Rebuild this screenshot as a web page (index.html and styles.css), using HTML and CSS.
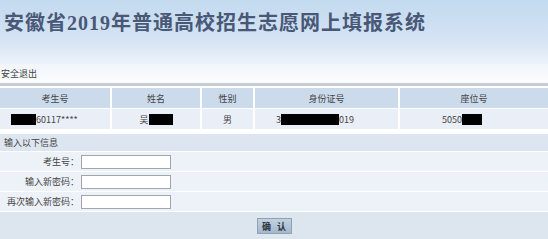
FILE: index.html
```html
<html lang="zh-CN">
<head>
  <meta charset="UTF-8">
  <title>安徽省2019年普通高校招生志愿网上填报系统</title>
  <link rel="stylesheet" href="styles.css">
</head>
<body>
  <!-- Banner -->
  <div class="banner">
    <h1 class="banner-title">安徽省2019年普通高校招生志愿网上填报系统</h1>
  </div>

  <!-- Logout Bar -->
  <div class="logout-bar"><a href="#" class="logout">安全退出</a></div>

  <!-- Student Info -->
  <div class="info-grid">
    <div class="cell head">考生号</div>
    <div class="cell head">姓名</div>
    <div class="cell head">性别</div>
    <div class="cell head">身份证号</div>
    <div class="cell head">座位号</div>

    <div class="cell left"><span class="mask" style="width: 25px"></span>60117****</div>
    <div class="cell">吴<span class="mask" style="width: 24px"></span></div>
    <div class="cell">男</div>
    <div class="cell left pad-id">3<span class="mask" style="width: 58px"></span>019</div>
    <div class="cell left pad-seat">5050<span class="mask" style="width: 20px"></span></div>
  </div>

  <!-- Password Form -->
  <form class="pwd-form">
    <div class="form-head">输入以下信息</div>
    <div class="form-row">
      <label class="form-label">考生号：</label>
      <input type="text" class="form-input">
    </div>
    <div class="form-row">
      <label class="form-label">输入新密码：</label>
      <input type="password" class="form-input">
    </div>
    <div class="form-row">
      <label class="form-label">再次输入新密码：</label>
      <input type="password" class="form-input">
    </div>
    <div class="form-foot">
      <button type="button" class="btn-ok">确 认</button>
    </div>
  </form>
</body>
</html>
```

FILE: styles.css
```css
/* Global Styles */
body {
  margin: 0;
  background-color: #ffffff;
  font-family: "Noto Sans CJK SC", sans-serif;
  font-size: 9px;
  color: #444;
}

/* Banner */
.banner {
  height: 64px;
  background: linear-gradient(to bottom, #c3daef 0%, #d3e3f3 60%, #ecf2fa 100%);
  overflow: hidden;
}
.banner-title {
  margin: 0;
  padding: 10px 0 0 4px;
  font-family: "Liberation Serif", "Noto Sans CJK SC", serif;
  font-size: 20px;
  font-weight: bold;
  letter-spacing: 1px;
  line-height: 26px;
  color: #4a5877;
}

/* Logout Bar */
.logout-bar {
  height: 19px;
  line-height: 19px;
  background: linear-gradient(to bottom, #f1f5fb, #fbfcfe);
  border-bottom: 3px solid #c5ccd4;
}
.logout {
  display: inline-block;
  padding-left: 1px;
  color: #444;
  text-decoration: none;
}

/* Info Grid */
.info-grid {
  display: grid;
  grid-template-columns: 110px 88px 51px 143px 1fr;
  grid-template-rows: 20px 20px;
  gap: 1px 2px;
  margin-top: 2px;
}
.cell {
  display: flex;
  align-items: center;
  justify-content: center;
  background-color: #e9eef7;
}
.cell.head {
  background-color: #ccdbeb;
}
.cell.left {
  justify-content: flex-start;
  padding-left: 11px;
}
.cell.pad-id {
  padding-left: 21px;
}
.cell.pad-seat {
  padding-left: 42px;
}
.mask {
  display: inline-block;
  height: 11px;
  background-color: #000;
}

/* Password Form */
.pwd-form {
  margin: 5px 0 0;
  display: flex;
  flex-direction: column;
  gap: 1px;
}
.form-head {
  height: 17px;
  line-height: 17px;
  padding-left: 4px;
  background-color: #dde6f0;
}
.form-row {
  display: flex;
  align-items: center;
  height: 19px;
  background-color: #edf1f8;
}
.form-label {
  width: 79px;
  text-align: right;
  margin-right: 2px;
}
.form-input {
  box-sizing: border-box;
  width: 90px;
  height: 14px;
  margin: 0;
  padding: 0 2px;
  border: 1px solid #9fa6ae;
  background-color: #fff;
  font-size: 9px;
}
.form-foot {
  height: 28px;
  display: flex;
  align-items: center;
  justify-content: center;
  background-color: #dde6ef;
}

/* Button */
.btn-ok {
  width: 35px;
  height: 16px;
  padding: 0;
  border: 1px solid #8ea1b5;
  background: linear-gradient(to bottom, #c2d1e0, #a4b8cc);
  font-family: "Noto Sans CJK SC", sans-serif;
  font-size: 9px;
  font-weight: bold;
  letter-spacing: 2px;
  text-indent: 2px;
  color: #2e3440;
  cursor: pointer;
}
```
